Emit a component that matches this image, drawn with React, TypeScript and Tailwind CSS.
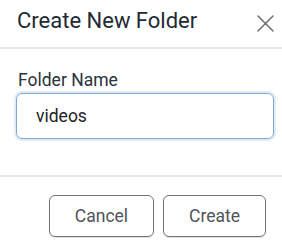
import { useState } from 'react';

const CloseIcon = () => (
  <svg width="17" height="17" viewBox="0 0 17 17" fill="none" stroke="#6b6f73" strokeWidth="1.5" strokeLinecap="round">
    <line x1="1" y1="1" x2="16" y2="16" />
    <line x1="16" y1="1" x2="1" y2="16" />
  </svg>
);

const App = () => {
  const [name, setName] = useState('videos');

  return (
    <div className="w-[282px] h-[247px] bg-white overflow-hidden" style={{ fontFamily: 'Roboto, "Liberation Sans", sans-serif' }}>
      {/* header */}
      <div className="h-[49px] border-b-2 border-[#e6e8ea] flex items-start justify-between pl-[17px] pr-[8px] pt-[8px]">
        <h5 className="text-[22px] leading-[26px] text-[#222a33]">Create New Folder</h5>
        <button className="mt-[7px] ml-[1px] w-[17px] h-[17px] flex items-center justify-center">
          <CloseIcon />
        </button>
      </div>

      {/* body */}
      <div className="h-[126px] pl-[16px] pr-[8px] pt-[18px]">
        <label htmlFor="folder" className="block pl-[2px] text-[17.5px] leading-[26px] text-[#2a323c]">
          Folder Name
        </label>
        <input
          id="folder"
          value={name}
          onChange={(e) => setName(e.target.value)}
          className="block w-full h-[46px] px-[19px] rounded-[6px] border border-[#7fa9dc] shadow-[0_0_0_2px_rgba(120,170,230,0.22)] text-[17.5px] text-[#222] outline-none"
        />
      </div>

      {/* footer */}
      <div className="border-t-2 border-[#e6e8ea] flex justify-end gap-[9px] pr-[16px] pt-[18px]">
        <button className="w-[105px] h-[42px] rounded-[6px] border border-[#6f7378] text-[17.5px] text-[#4f5459] shadow-[0_1px_1px_rgba(0,0,0,0.12)]">
          Cancel
        </button>
        <button className="w-[103px] h-[42px] rounded-[6px] border border-[#6f7378] text-[17.5px] text-[#4f5459] shadow-[0_1px_1px_rgba(0,0,0,0.12)]">
          Create
        </button>
      </div>
    </div>
  );
};

export default App;
